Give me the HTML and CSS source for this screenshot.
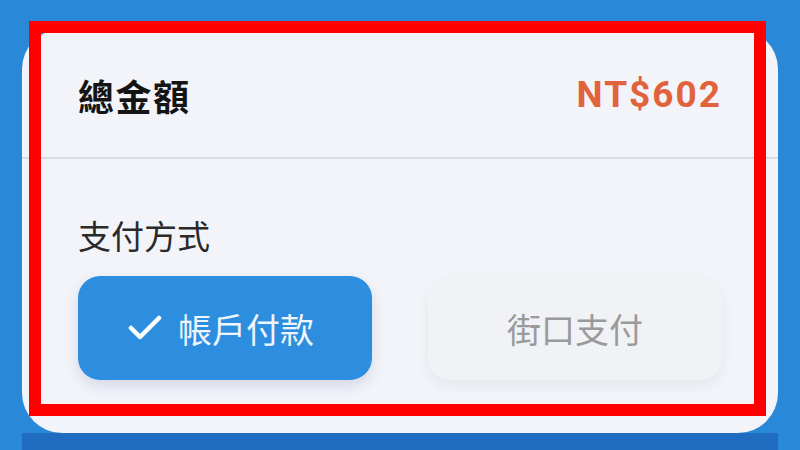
FILE: index.html
```html
<!DOCTYPE html>
<html lang="zh-Hant">
<head>
<meta charset="utf-8">
<link rel="stylesheet" href="styles.css">
</head>
<body>
<div class="page">
  <div class="card">
    <div class="total-row">
      <span class="total-label">總金額</span>
      <span class="total-amount">NT$602</span>
    </div>
    <div class="pay-section">
      <div class="pay-label">支付方式</div>
      <div class="pay-options">
        <button class="pay-btn active">
          <svg class="check" width="34" height="26" viewBox="0 0 34 26"><polyline points="3,13 12,22 31,3" fill="none" stroke="#fff" stroke-width="4.5" stroke-linecap="round" stroke-linejoin="round"/></svg>
          <span>帳戶付款</span>
        </button>
        <button class="pay-btn">
          <span>街口支付</span>
        </button>
      </div>
    </div>
  </div>
  <div class="under-bar"></div>
  <div class="highlight"></div>
</div>
</body>
</html>
```
FILE: styles.css
```css
html, body {
  margin: 0;
  padding: 0;
}
body {
  width: 800px;
  height: 450px;
  overflow: hidden;
  background: #2a88d8;
  font-family: "Noto Sans CJK TC", "Noto Sans", sans-serif;
}
.page {
  position: relative;
  padding: 29px 22px 0;
}
.card {
  background: #f3f4f9;
  border-radius: 40px;
  height: 404px;
  box-sizing: border-box;
  overflow: hidden;
}
.total-row {
  display: flex;
  justify-content: space-between;
  align-items: center;
  padding: 44px 56px 40px;
  border-bottom: 2px solid #d8dbe2;
  line-height: 44px;
  height: 44px;
}
.total-label {
  font-size: 36px;
  font-weight: 700;
  color: #141414;
  letter-spacing: 1.5px;
}
.total-amount {
  font-family: Roboto, "Liberation Sans", sans-serif;
  font-size: 37px;
  font-weight: 700;
  color: #e2623c;
  letter-spacing: 2px;
}
.pay-section {
  padding: 54px 56px 0;
}
.pay-label {
  font-size: 33px;
  line-height: 44px;
  color: #2a2a2a;
}
.pay-options {
  display: grid;
  grid-template-columns: 1fr 1fr;
  gap: 56px;
  margin-top: 19px;
}
.pay-btn {
  height: 104px;
  border: none;
  border-radius: 22px;
  background: #f1f2f6;
  color: #9a9a9a;
  font-family: "Noto Sans CJK TC", "Noto Sans", sans-serif;
  font-size: 34px;
  display: flex;
  align-items: center;
  justify-content: center;
  gap: 16px;
  box-shadow: 0 6px 14px rgba(20, 30, 60, 0.06);
  padding: 0;
}
.pay-btn.active {
  background: #2d8edf;
  color: #eef5fc;
  box-shadow: 0 6px 14px rgba(20, 60, 120, 0.14);
  padding-right: 8px;
}
.check {
  display: block;
}
.under-bar {
  height: 30px;
  background: #1f6cc0;
}
.highlight {
  position: absolute;
  left: 29px;
  top: 21px;
  width: 713px;
  height: 371px;
  border: 12px solid #ff0000;
}
```
